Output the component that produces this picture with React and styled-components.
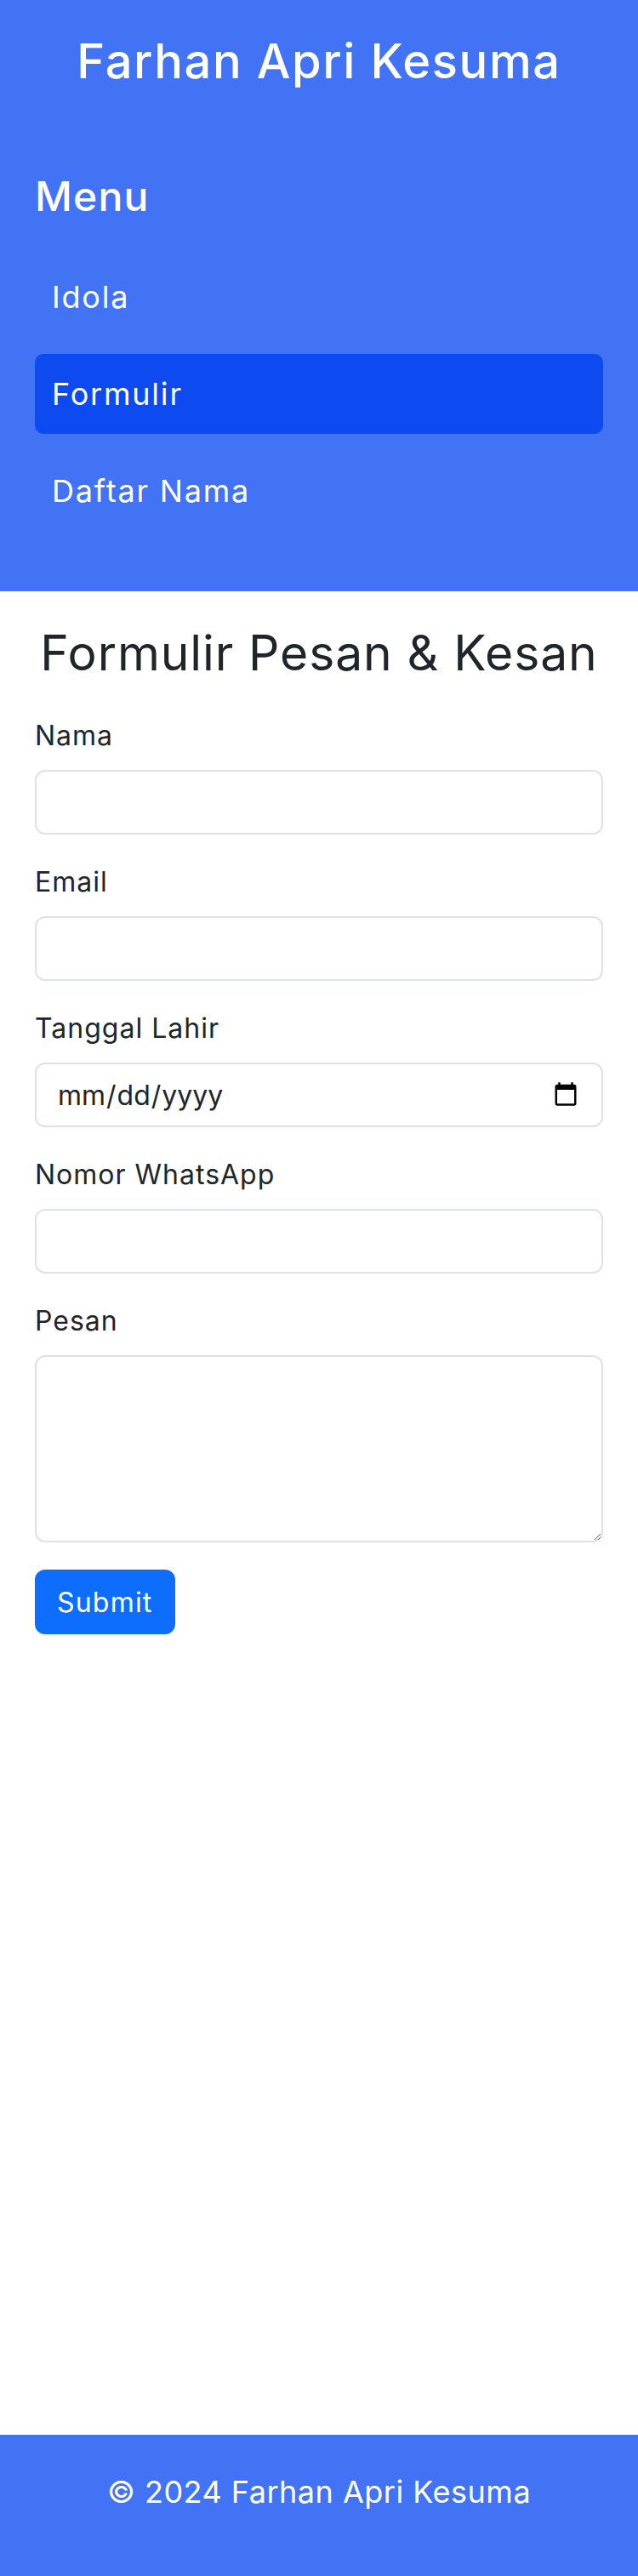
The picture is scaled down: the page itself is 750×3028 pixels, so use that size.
import React from 'react';
import styled, { createGlobalStyle } from 'styled-components';

const GlobalStyle = createGlobalStyle`
  * { box-sizing: border-box; }
  body {
    margin: 0;
    font-family: Inter, "Noto Sans", sans-serif;
    color: #212529;
    background: #fff;
  }
`;

const Page = styled.div`
  display: flex;
  flex-direction: column;
  min-height: 100vh;
`;

const Header = styled.header`
  background: #4373f5;
  color: #fff;
  padding: 36px 41px 71px;
`;

const SiteTitle = styled.h1`
  margin: 0 0 94px;
  text-align: center;
  font-size: 56px;
  font-weight: 500;
  line-height: 72px;
  letter-spacing: 1.6px;
`;

const NavTitle = styled.h2`
  margin: 0 0 42px;
  font-size: 48px;
  font-weight: 500;
  line-height: 58px;
  letter-spacing: 1.2px;
`;

const NavList = styled.ul`
  list-style: none;
  margin: 0;
  padding: 0;
  display: flex;
  flex-direction: column;
  gap: 20px;
`;

const NavLink = styled.a`
  display: block;
  padding: 20px;
  border-radius: 10px;
  font-size: 36px;
  line-height: 54px;
  letter-spacing: 1.8px;
  color: #fff;
  text-decoration: none;
  background: ${(p) => (p.$active ? '#0d4af0' : 'transparent')};
`;

const Main = styled.main`
  flex: 1;
  padding: 37px 41px 40px;
`;

const FormTitle = styled.h2`
  margin: 0 0 37px;
  text-align: center;
  font-size: 57px;
  font-weight: 400;
  line-height: 72px;
  letter-spacing: 0.9px;
`;

const Field = styled.div`
  margin-bottom: 32px;
`;

const Label = styled.label`
  display: block;
  margin-bottom: 16px;
  font-size: 32px;
  line-height: 48px;
  letter-spacing: 1px;
`;

const Input = styled.input`
  display: block;
  width: 100%;
  height: 76px;
  padding: 12px 24px;
  border: 2px solid #dee2e6;
  border-radius: 12px;
  font-family: inherit;
  font-size: 32px;
  letter-spacing: ${(p) => (p.type === 'date' ? '0' : '1px')};
  color: #212529;
  background: #fff;
  outline: none;
`;

const TextArea = styled.textarea`
  display: block;
  width: 100%;
  height: 220px;
  padding: 12px 24px;
  border: 2px solid #dee2e6;
  border-radius: 12px;
  font-family: inherit;
  font-size: 32px;
  resize: vertical;
`;

const SubmitButton = styled.button`
  height: 76px;
  padding: 0 26px;
  border: none;
  border-radius: 12px;
  background: #0d6efd;
  color: #fff;
  font-family: inherit;
  font-size: 32px;
  letter-spacing: 1.2px;
  cursor: pointer;
`;

const Footer = styled.footer`
  background: #4373f5;
  color: #fff;
  text-align: center;
  padding: 40px 20px;
  p {
    margin: 0 0 32px;
    font-size: 36px;
    line-height: 54px;
    letter-spacing: 0.5px;
  }
`;

const links = [
  { label: 'Idola' },
  { label: 'Formulir', active: true },
  { label: 'Daftar Nama' },
];

const fields = [
  { id: 'nama', label: 'Nama', type: 'text' },
  { id: 'email', label: 'Email', type: 'email' },
  { id: 'tgl', label: 'Tanggal Lahir', type: 'date' },
  { id: 'wa', label: 'Nomor WhatsApp', type: 'tel' },
];

const App = () => {
  return (
    <Page>
      <GlobalStyle />
      <Header>
        <SiteTitle>Farhan Apri Kesuma</SiteTitle>
        <nav>
          <NavTitle>Menu</NavTitle>
          <NavList>
            {links.map((l) => (
              <li key={l.label}>
                <NavLink href="#" $active={l.active}>{l.label}</NavLink>
              </li>
            ))}
          </NavList>
        </nav>
      </Header>
      <Main>
        <FormTitle>Formulir Pesan &amp; Kesan</FormTitle>
        <form onSubmit={(e) => e.preventDefault()}>
          {fields.map((f) => (
            <Field key={f.id}>
              <Label htmlFor={f.id}>{f.label}</Label>
              <Input id={f.id} type={f.type} />
            </Field>
          ))}
          <Field>
            <Label htmlFor="pesan">Pesan</Label>
            <TextArea id="pesan" />
          </Field>
          <SubmitButton type="submit">Submit</SubmitButton>
        </form>
      </Main>
      <Footer>
        <p>© 2024 Farhan Apri Kesuma</p>
      </Footer>
    </Page>
  );
};

export default App;
